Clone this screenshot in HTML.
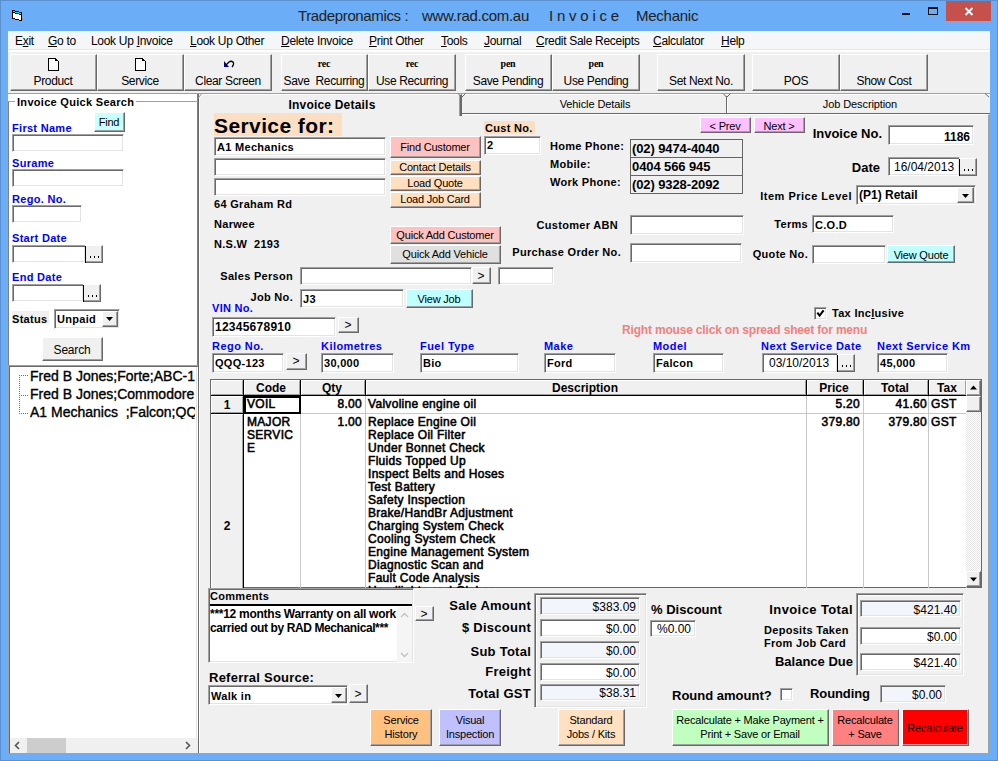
<!DOCTYPE html>
<html><head><meta charset="utf-8"><title>Invoice</title><style>
*{margin:0;padding:0;box-sizing:border-box}
html,body{width:998px;height:761px;overflow:hidden;background:#6BADF6}
body{position:relative;font-family:"Liberation Sans",sans-serif;color:#000}
.a{position:absolute}
.tx{white-space:nowrap}
u{text-decoration:underline;text-underline-offset:1px}
.sk{border-top:1px solid #a0a0a0;border-left:1px solid #a0a0a0;border-right:1px solid #fff;border-bottom:1px solid #fff;box-shadow:inset 1px 1px 0 #696969,inset -1px -1px 0 #e3e3e3}
.rs{border-top:1px solid #fff;border-left:1px solid #fff;border-right:1px solid #696969;border-bottom:1px solid #696969;box-shadow:inset -1px -1px 0 #a0a0a0}
.tb{background:#F0F0F0;border-top:1px solid #fff;border-left:1px solid #fff;border-right:1px solid #696969;border-bottom:1px solid #696969;box-shadow:inset -1px -1px 0 #a0a0a0}
</style></head><body>
<div class="a" style="left:0px;top:0px;width:998px;height:761px;background:#6BADF6"></div>
<div class="a" style="left:0px;top:0px;width:998px;height:1px;background:#5a8fd0"></div>
<div class="a" style="left:0px;top:0px;width:1px;height:761px;background:#5a8fd0"></div>
<div class="a" style="left:997px;top:0px;width:1px;height:761px;background:#5a8fd0"></div>
<div class="a" style="left:0px;top:760px;width:998px;height:1px;background:#5a8fd0"></div>
<svg class="a" style="left:12px;top:10px" width="11" height="12" viewBox="0 0 11 12" shape-rendering="crispEdges"><rect x="0" y="0" width="3" height="9" fill="#000"/><rect x="3" y="1" width="4" height="9" fill="#000"/><rect x="7" y="2" width="3" height="9" fill="#000"/><rect x="1" y="1" width="2" height="1" fill="#0ee"/><rect x="3" y="2" width="4" height="1" fill="#0ee"/><rect x="7" y="3" width="2" height="1" fill="#0ee"/><rect x="1" y="3" width="2" height="5" fill="#fff"/><rect x="3" y="4" width="4" height="5" fill="#fff"/><rect x="7" y="5" width="2" height="5" fill="#fff"/><rect x="10" y="8" width="1" height="2" fill="#a08870"/></svg>
<div class="a tx" style="left:298px;top:8px;font-size:15px;line-height:15px;font-weight:normal;color:#222;letter-spacing:-0.37px;">Tradepronamics :</div>
<div class="a tx" style="left:422px;top:8px;font-size:15px;line-height:15px;font-weight:normal;color:#222;letter-spacing:-0.28px;">www.rad.com.au</div>
<div class="a tx" style="left:549px;top:8px;font-size:15px;line-height:15px;font-weight:normal;color:#222;letter-spacing:-0.2px;">I n v o i c e</div>
<div class="a tx" style="left:636px;top:8px;font-size:15px;line-height:15px;font-weight:normal;color:#222;letter-spacing:-0.25px;">Mechanic</div>
<div class="a" style="left:902px;top:13px;width:8px;height:2px;background:#111"></div>
<div class="a" style="left:928px;top:7px;width:10px;height:8px;border:1px solid #111;border-top-width:2px"></div>
<div class="a" style="left:946px;top:1px;width:45px;height:20px;background:#C6504C"></div>
<svg class="a" style="left:964px;top:7px" width="10" height="9" viewBox="0 0 10 9"><path d="M1.5 1L8.5 8M8.5 1L1.5 8" stroke="#fff" stroke-width="1.9"/></svg>
<div class="a" style="left:8px;top:31px;width:982px;height:722px;background:#F0F0F0"></div>
<div class="a" style="left:8px;top:31px;width:982px;height:19px;background:#F5F6F7"></div>
<div class="a" style="left:8px;top:49px;width:982px;height:1px;background:#E6E7E8"></div>
<div class="a" style="left:8px;top:50px;width:982px;height:2px;background:#fff"></div>
<div class="a tx" style="left:15px;top:35px;font-size:12px;line-height:12px;font-weight:normal;color:#000;letter-spacing:-0.3px;">E<u>x</u>it</div>
<div class="a tx" style="left:48px;top:35px;font-size:12px;line-height:12px;font-weight:normal;color:#000;letter-spacing:-0.3px;"><u>G</u>o to</div>
<div class="a tx" style="left:91px;top:35px;font-size:12px;line-height:12px;font-weight:normal;color:#000;letter-spacing:-0.3px;">Look Up <u>I</u>nvoice</div>
<div class="a tx" style="left:190px;top:35px;font-size:12px;line-height:12px;font-weight:normal;color:#000;letter-spacing:-0.3px;"><u>L</u>ook Up Other</div>
<div class="a tx" style="left:281px;top:35px;font-size:12px;line-height:12px;font-weight:normal;color:#000;letter-spacing:-0.3px;"><u>D</u>elete Invoice</div>
<div class="a tx" style="left:369px;top:35px;font-size:12px;line-height:12px;font-weight:normal;color:#000;letter-spacing:-0.3px;"><u>P</u>rint Other</div>
<div class="a tx" style="left:441px;top:35px;font-size:12px;line-height:12px;font-weight:normal;color:#000;letter-spacing:-0.3px;"><u>T</u>ools</div>
<div class="a tx" style="left:484px;top:35px;font-size:12px;line-height:12px;font-weight:normal;color:#000;letter-spacing:-0.3px;"><u>J</u>ournal</div>
<div class="a tx" style="left:536px;top:35px;font-size:12px;line-height:12px;font-weight:normal;color:#000;letter-spacing:-0.3px;"><u>C</u>redit Sale Receipts</div>
<div class="a tx" style="left:653px;top:35px;font-size:12px;line-height:12px;font-weight:normal;color:#000;letter-spacing:-0.3px;"><u>C</u>alculator</div>
<div class="a tx" style="left:721px;top:35px;font-size:12px;line-height:12px;font-weight:normal;color:#000;letter-spacing:-0.3px;"><u>H</u>elp</div>
<div class="a" style="left:8px;top:52px;width:982px;height:41px;background:#F0F0F0"></div>
<div class="a" style="left:8px;top:93px;width:982px;height:1px;background:#A0A0A0"></div>
<div class="a tb" style="left:10px;top:54px;width:87px;height:37px"></div>
<div class="a tx" style="left:-247px;width:600px;text-align:center;top:75px;font-size:12px;line-height:12px;font-weight:normal;color:#000;letter-spacing:-0.35px;">Product</div>
<svg class="a" style="left:48px;top:58px" width="12" height="14" viewBox="0 0 12 14" shape-rendering="crispEdges"><path d="M0.5 0.5h7l3 3v9h-10z" fill="#fff" stroke="#000" stroke-width="1.2"/><rect x="7" y="1" width="1" height="2" fill="#000"/><rect x="8" y="2" width="2" height="1" fill="#000"/></svg>
<div class="a tb" style="left:97px;top:54px;width:87px;height:37px"></div>
<div class="a tx" style="left:-160px;width:600px;text-align:center;top:75px;font-size:12px;line-height:12px;font-weight:normal;color:#000;letter-spacing:-0.35px;">Service</div>
<svg class="a" style="left:135px;top:58px" width="12" height="14" viewBox="0 0 12 14" shape-rendering="crispEdges"><path d="M0.5 0.5h7l3 3v9h-10z" fill="#fff" stroke="#000" stroke-width="1.2"/><rect x="7" y="1" width="1" height="2" fill="#000"/><rect x="8" y="2" width="2" height="1" fill="#000"/></svg>
<div class="a tb" style="left:184px;top:54px;width:88px;height:37px"></div>
<div class="a tx" style="left:-72px;width:600px;text-align:center;top:75px;font-size:12px;line-height:12px;font-weight:normal;color:#000;letter-spacing:-0.35px;">Clear Screen</div>
<svg class="a" style="left:223px;top:60px" width="12" height="8" viewBox="0 0 12 8"><path d="M1 1v6h5z" fill="#00008B"/><path d="M3 5l3-3q2-1.5 4 0q1.5 2-1 5" fill="none" stroke="#000" stroke-width="1.3"/></svg>
<div class="a tb" style="left:281px;top:54px;width:87px;height:37px"></div>
<div class="a tx" style="left:24px;width:600px;text-align:center;top:75px;font-size:12px;line-height:12px;font-weight:normal;color:#000;letter-spacing:-0.35px;">Save&nbsp; Recurring</div>
<div class="a tx" style="left:24px;width:600px;text-align:center;top:59px;font-size:10px;line-height:10px;font-weight:bold;color:#000;letter-spacing:-0.2px;font-family:'Liberation Serif'">rec</div>
<div class="a tb" style="left:368px;top:54px;width:88px;height:37px"></div>
<div class="a tx" style="left:112px;width:600px;text-align:center;top:75px;font-size:12px;line-height:12px;font-weight:normal;color:#000;letter-spacing:-0.35px;">Use Recurring</div>
<div class="a tx" style="left:112px;width:600px;text-align:center;top:59px;font-size:10px;line-height:10px;font-weight:bold;color:#000;letter-spacing:-0.2px;font-family:'Liberation Serif'">rec</div>
<div class="a tb" style="left:465px;top:54px;width:87px;height:37px"></div>
<div class="a tx" style="left:208px;width:600px;text-align:center;top:75px;font-size:12px;line-height:12px;font-weight:normal;color:#000;letter-spacing:-0.35px;">Save Pending</div>
<div class="a tx" style="left:208px;width:600px;text-align:center;top:59px;font-size:10px;line-height:10px;font-weight:bold;color:#000;letter-spacing:-0.2px;font-family:'Liberation Serif'">pen</div>
<div class="a tb" style="left:552px;top:54px;width:88px;height:37px"></div>
<div class="a tx" style="left:296px;width:600px;text-align:center;top:75px;font-size:12px;line-height:12px;font-weight:normal;color:#000;letter-spacing:-0.35px;">Use Pending</div>
<div class="a tx" style="left:296px;width:600px;text-align:center;top:59px;font-size:10px;line-height:10px;font-weight:bold;color:#000;letter-spacing:-0.2px;font-family:'Liberation Serif'">pen</div>
<div class="a tb" style="left:657px;top:54px;width:88px;height:37px"></div>
<div class="a tx" style="left:401px;width:600px;text-align:center;top:75px;font-size:12px;line-height:12px;font-weight:normal;color:#000;letter-spacing:-0.35px;">Set Next No.</div>
<div class="a tb" style="left:752px;top:54px;width:88px;height:37px"></div>
<div class="a tx" style="left:496px;width:600px;text-align:center;top:75px;font-size:12px;line-height:12px;font-weight:normal;color:#000;letter-spacing:-0.35px;">POS</div>
<div class="a tb" style="left:840px;top:54px;width:88px;height:37px"></div>
<div class="a tx" style="left:584px;width:600px;text-align:center;top:75px;font-size:12px;line-height:12px;font-weight:normal;color:#000;letter-spacing:-0.35px;">Show Cost</div>
<div class="a" style="left:8px;top:94px;width:190px;height:644px;background:#fff"></div>
<div class="a" style="left:198px;top:94px;width:1px;height:659px;background:#696969"></div>
<div class="a" style="left:197px;top:94px;width:1px;height:271px;background:#808080"></div>
<div class="a" style="left:196px;top:367px;width:1px;height:371px;background:#e3e3e3"></div>
<div class="a" style="left:8px;top:365px;width:1px;height:388px;background:#a0a0a0"></div>
<div class="a" style="left:9px;top:366px;width:1px;height:387px;background:#696969"></div>
<div class="a" style="left:8px;top:365px;width:190px;height:1px;background:#a0a0a0"></div>
<div class="a" style="left:9px;top:366px;width:189px;height:1px;background:#696969"></div>
<div class="a" style="left:8px;top:101px;width:1px;height:264px;background:#808080"></div>
<div class="a" style="left:8px;top:101px;width:190px;height:1px;background:#a0a0a0"></div>
<div class="a tx" style="left:15px;top:97px;background:#fff;padding:0 2px;font-size:11px;line-height:11px;font-weight:bold;letter-spacing:0.3px">Invoice Quick Search</div>
<div class="a rs" style="left:94px;top:112px;width:31px;height:20px;background:#C8FFFF;"></div>
<div class="a tx" style="left:-191px;width:600px;text-align:center;top:117px;font-size:11px;line-height:11px;font-weight:normal;color:#000;letter-spacing:-0.2px;">Find</div>
<div class="a tx" style="left:12px;top:123px;font-size:11px;line-height:11px;font-weight:bold;color:#0000FF;letter-spacing:0.3px;">First Name</div>
<div class="a sk" style="left:12px;top:134px;width:112px;height:18px;background:#fff;"></div>
<div class="a tx" style="left:12px;top:158px;font-size:11px;line-height:11px;font-weight:bold;color:#0000FF;letter-spacing:0.3px;">Surame</div>
<div class="a sk" style="left:12px;top:169px;width:112px;height:18px;background:#fff;"></div>
<div class="a tx" style="left:12px;top:194px;font-size:11px;line-height:11px;font-weight:bold;color:#0000FF;letter-spacing:0.3px;">Rego. No.</div>
<div class="a sk" style="left:12px;top:205px;width:70px;height:18px;background:#fff;"></div>
<div class="a tx" style="left:12px;top:233px;font-size:11px;line-height:11px;font-weight:bold;color:#0000FF;letter-spacing:0.3px;">Start Date</div>
<div class="a sk" style="left:12px;top:245px;width:74px;height:18px;background:#fff;"></div>
<div class="a rs" style="left:85px;top:245px;width:18px;height:18px;background:#F0F0F0;"></div>
<div class="a" style="left:85px;top:246px;width:1px;height:17px;background:#000"></div>
<div class="a" style="left:90px;top:256px;width:1px;height:2px;background:#000"></div>
<div class="a" style="left:94px;top:256px;width:1px;height:2px;background:#000"></div>
<div class="a" style="left:98px;top:256px;width:1px;height:2px;background:#000"></div>
<div class="a tx" style="left:12px;top:272px;font-size:11px;line-height:11px;font-weight:bold;color:#0000FF;letter-spacing:0.3px;">End Date</div>
<div class="a sk" style="left:12px;top:284px;width:72px;height:18px;background:#fff;"></div>
<div class="a rs" style="left:83px;top:284px;width:18px;height:18px;background:#F0F0F0;"></div>
<div class="a" style="left:83px;top:285px;width:1px;height:17px;background:#000"></div>
<div class="a" style="left:88px;top:295px;width:1px;height:2px;background:#000"></div>
<div class="a" style="left:92px;top:295px;width:1px;height:2px;background:#000"></div>
<div class="a" style="left:96px;top:295px;width:1px;height:2px;background:#000"></div>
<div class="a" style="left:12px;top:311px;width:37px;height:13px;background:#F0F0F0"></div>
<div class="a tx" style="left:12px;top:314px;font-size:11px;line-height:11px;font-weight:bold;color:#000;letter-spacing:0.3px;">Status</div>
<div class="a sk" style="left:54px;top:309px;width:66px;height:20px;background:#fff;"></div>
<div class="a tx" style="left:57px;top:314px;font-size:11px;line-height:11px;font-weight:bold;color:#000;letter-spacing:0.3px;">Unpaid</div>
<div class="a rs" style="left:102px;top:311px;width:16px;height:16px;background:#F0F0F0;"></div>
<svg class="a" style="left:106px;top:317px" width="8" height="4"><path d="M0 0h7l-3.5 4z" fill="#000"/></svg>
<div class="a rs" style="left:42px;top:337px;width:61px;height:24px;background:#F0F0F0;"></div>
<div class="a tx" style="left:-228px;width:600px;text-align:center;top:344px;font-size:12px;line-height:12px;font-weight:normal;color:#000;letter-spacing:-0.2px;">Search</div>
<div class="a tx" style="left:30px;top:369px;font-size:14px;line-height:14px;font-weight:normal;color:#000;width:165px;overflow:hidden;-webkit-text-stroke:0.35px #000">Fred B Jones;Forte;ABC-123</div>
<div class="a tx" style="left:30px;top:387px;font-size:14px;line-height:14px;font-weight:normal;color:#000;width:165px;overflow:hidden;-webkit-text-stroke:0.35px #000">Fred B Jones;Commodore;XYZ</div>
<div class="a tx" style="left:30px;top:405px;font-size:14px;line-height:14px;font-weight:normal;color:#000;width:165px;overflow:hidden;-webkit-text-stroke:0.35px #000">A1 Mechanics&nbsp; ;Falcon;QQQ-123</div>
<svg class="a" style="left:19px;top:375px" width="10" height="40" shape-rendering="crispEdges"><rect x="0" y="0" width="1" height="1" fill="#707070"/><rect x="0" y="2" width="1" height="1" fill="#707070"/><rect x="0" y="4" width="1" height="1" fill="#707070"/><rect x="0" y="6" width="1" height="1" fill="#707070"/><rect x="0" y="8" width="1" height="1" fill="#707070"/><rect x="0" y="10" width="1" height="1" fill="#707070"/><rect x="0" y="12" width="1" height="1" fill="#707070"/><rect x="0" y="14" width="1" height="1" fill="#707070"/><rect x="0" y="16" width="1" height="1" fill="#707070"/><rect x="0" y="18" width="1" height="1" fill="#707070"/><rect x="0" y="20" width="1" height="1" fill="#707070"/><rect x="0" y="22" width="1" height="1" fill="#707070"/><rect x="0" y="24" width="1" height="1" fill="#707070"/><rect x="0" y="26" width="1" height="1" fill="#707070"/><rect x="0" y="28" width="1" height="1" fill="#707070"/><rect x="0" y="30" width="1" height="1" fill="#707070"/><rect x="0" y="32" width="1" height="1" fill="#707070"/><rect x="0" y="34" width="1" height="1" fill="#707070"/><rect x="0" y="36" width="1" height="1" fill="#707070"/><rect x="0" y="38" width="1" height="1" fill="#707070"/><rect x="2" y="0" width="1" height="1" fill="#707070"/><rect x="4" y="0" width="1" height="1" fill="#707070"/><rect x="6" y="0" width="1" height="1" fill="#707070"/><rect x="8" y="0" width="1" height="1" fill="#707070"/><rect x="2" y="20" width="1" height="1" fill="#707070"/><rect x="4" y="20" width="1" height="1" fill="#707070"/><rect x="6" y="20" width="1" height="1" fill="#707070"/><rect x="8" y="20" width="1" height="1" fill="#707070"/><rect x="2" y="38" width="1" height="1" fill="#707070"/><rect x="4" y="38" width="1" height="1" fill="#707070"/><rect x="6" y="38" width="1" height="1" fill="#707070"/><rect x="8" y="38" width="1" height="1" fill="#707070"/></svg>
<div class="a" style="left:10px;top:738px;width:187px;height:15px;background:#F0F0F0"></div>
<div class="a" style="left:27px;top:738px;width:39px;height:15px;background:#CDCDCD"></div>
<svg class="a" style="left:14px;top:741px" width="7" height="9"><path d="M5 1L1.5 4.5L5 8" stroke="#555" stroke-width="1.6" fill="none"/></svg>
<svg class="a" style="left:184px;top:741px" width="7" height="9"><path d="M2 1L5.5 4.5L2 8" stroke="#555" stroke-width="1.6" fill="none"/></svg>
<div class="a" style="left:199px;top:114px;width:791px;height:639px;background:#F0F0F0;border-top:1px solid #fff;border-left:1px solid #fff;border-right:2px solid #a0a0a0"></div>
<div class="a" style="left:462px;top:94px;width:528px;height:19px;background:#F0F0F0;border-top:1px solid #fff"></div>
<div class="a" style="left:462px;top:113px;width:528px;height:1px;background:#696969"></div>
<div class="a" style="left:726px;top:96px;width:1px;height:17px;background:#696969"></div>
<div class="a" style="left:727px;top:96px;width:1px;height:17px;background:#fff"></div>
<svg class="a" style="left:722px;top:93px" width="10" height="5"><path d="M1 0.5L4.5 4M8.5 0.5L5 4" stroke="#696969" fill="none"/></svg>
<svg class="a" style="left:984px;top:93px" width="6" height="5"><path d="M1 0.5L5 4" stroke="#696969" fill="none"/></svg>
<div class="a tx" style="left:295px;width:600px;text-align:center;top:99px;font-size:11px;line-height:11px;font-weight:normal;color:#000;letter-spacing:-0.1px;">Vehicle Details</div>
<div class="a tx" style="left:560px;width:600px;text-align:center;top:99px;font-size:11px;line-height:11px;font-weight:normal;color:#000;letter-spacing:-0.1px;">Job Description</div>
<div class="a" style="left:199px;top:94px;width:263px;height:22px;background:#F0F0F0;border-top:1px solid #fff;border-left:1px solid #fff;border-right:2px solid #696969;box-shadow:inset -1px 0 0 #a0a0a0"></div>
<div class="a" style="left:199px;top:94px;width:3px;height:3px;background:#F0F0F0"></div>
<svg class="a" style="left:197px;top:93px" width="6" height="6"><path d="M2.5 5L5.5 1.5" stroke="#fff" fill="none"/><path d="M1 5.5L4.5 1" stroke="#a0a0a0" fill="none"/></svg>
<svg class="a" style="left:457px;top:93px" width="10" height="5"><path d="M1 0.5L4.5 4M8.5 0.5L5 4" stroke="#696969" fill="none"/></svg>
<div class="a tx" style="left:32px;width:600px;text-align:center;top:99px;font-size:12px;line-height:12px;font-weight:bold;color:#000;letter-spacing:0.2px;">Invoice Details</div>
<div class="a" style="left:214px;top:113px;width:128px;height:23px;background:#FCDEC2"></div>
<div class="a tx" style="left:214px;top:115px;font-size:21px;line-height:21px;font-weight:bold;color:#000;letter-spacing:0.4px;">Service for:</div>
<div class="a sk" style="left:214px;top:137px;width:172px;height:19px;background:#fff;"></div>
<div class="a tx" style="left:217px;top:142px;font-size:11px;line-height:11px;font-weight:bold;color:#000;letter-spacing:0.3px;">A1 Mechanics</div>
<div class="a sk" style="left:214px;top:158px;width:172px;height:18px;background:#fff;"></div>
<div class="a sk" style="left:214px;top:178px;width:172px;height:18px;background:#fff;"></div>
<div class="a tx" style="left:214px;top:199px;font-size:11px;line-height:11px;font-weight:bold;color:#000;letter-spacing:0.3px;">64 Graham Rd</div>
<div class="a tx" style="left:214px;top:219px;font-size:11px;line-height:11px;font-weight:bold;color:#000;letter-spacing:0.3px;">Narwee</div>
<div class="a tx" style="left:214px;top:239px;font-size:11px;line-height:11px;font-weight:bold;color:#000;letter-spacing:0.3px;">N.S.W&nbsp; 2193</div>
<div class="a rs" style="left:390px;top:136px;width:91px;height:22px;background:#FFC0C0;"></div>
<div class="a tx" style="left:135px;width:600px;text-align:center;top:142px;font-size:11px;line-height:11px;font-weight:normal;color:#000;letter-spacing:-0.2px;">Find Customer</div>
<div class="a rs" style="left:390px;top:160px;width:91px;height:15px;background:#FFDFBF;"></div>
<div class="a tx" style="left:135px;width:600px;text-align:center;top:162px;font-size:11px;line-height:11px;font-weight:normal;color:#000;letter-spacing:-0.2px;">Contact Details</div>
<div class="a rs" style="left:390px;top:176px;width:91px;height:15px;background:#FFDFBF;"></div>
<div class="a tx" style="left:135px;width:600px;text-align:center;top:178px;font-size:11px;line-height:11px;font-weight:normal;color:#000;letter-spacing:-0.2px;">Load Quote</div>
<div class="a rs" style="left:390px;top:192px;width:91px;height:16px;background:#FFDFBF;"></div>
<div class="a tx" style="left:135px;width:600px;text-align:center;top:194px;font-size:11px;line-height:11px;font-weight:normal;color:#000;letter-spacing:-0.2px;">Load Job Card</div>
<div class="a rs" style="left:390px;top:226px;width:111px;height:18px;background:#FFC0C0;"></div>
<div class="a tx" style="left:145px;width:600px;text-align:center;top:230px;font-size:11px;line-height:11px;font-weight:normal;color:#000;letter-spacing:-0.2px;">Quick Add Customer</div>
<div class="a rs" style="left:390px;top:245px;width:111px;height:19px;background:#E0E0E0;"></div>
<div class="a tx" style="left:145px;width:600px;text-align:center;top:249px;font-size:11px;line-height:11px;font-weight:normal;color:#000;letter-spacing:-0.2px;">Quick Add Vehicle</div>
<div class="a" style="left:484px;top:121px;width:51px;height:13px;background:#FCDEC2"></div>
<div class="a tx" style="left:485px;top:123px;font-size:11px;line-height:11px;font-weight:bold;color:#000;letter-spacing:0.3px;">Cust No.</div>
<div class="a sk" style="left:484px;top:136px;width:57px;height:19px;background:#fff;"></div>
<div class="a tx" style="left:487px;top:140px;font-size:11px;line-height:11px;font-weight:bold;color:#000;letter-spacing:0.3px;">2</div>
<div class="a tx" style="left:550px;top:141px;font-size:11px;line-height:11px;font-weight:bold;color:#000;letter-spacing:0.3px;">Home Phone:</div>
<div class="a tx" style="left:550px;top:159px;font-size:11px;line-height:11px;font-weight:bold;color:#000;letter-spacing:0.3px;">Mobile:</div>
<div class="a tx" style="left:550px;top:177px;font-size:11px;line-height:11px;font-weight:bold;color:#000;letter-spacing:0.3px;">Work Phone:</div>
<div class="a" style="left:630px;top:139px;width:113px;height:19px;border:1px solid #646464;background:#F0F0F0"></div>
<div class="a tx" style="left:632px;top:142px;font-size:13px;line-height:13px;font-weight:bold;color:#000;letter-spacing:-0.1px;">(02) 9474-4040</div>
<div class="a" style="left:630px;top:157px;width:113px;height:19px;border:1px solid #646464;background:#F0F0F0"></div>
<div class="a tx" style="left:632px;top:160px;font-size:13px;line-height:13px;font-weight:bold;color:#000;letter-spacing:-0.1px;">0404 566 945</div>
<div class="a" style="left:630px;top:175px;width:113px;height:19px;border:1px solid #646464;background:#F0F0F0"></div>
<div class="a tx" style="left:632px;top:178px;font-size:13px;line-height:13px;font-weight:bold;color:#000;letter-spacing:-0.1px;">(02) 9328-2092</div>
<div class="a tx" style="right:380px;top:220px;font-size:11px;line-height:11px;font-weight:bold;color:#000;letter-spacing:0.3px;">Customer ABN</div>
<div class="a sk" style="left:630px;top:215px;width:114px;height:20px;background:#fff;"></div>
<div class="a tx" style="right:377px;top:247px;font-size:11px;line-height:11px;font-weight:bold;color:#000;letter-spacing:0.3px;">Purchase Order No.</div>
<div class="a sk" style="left:630px;top:243px;width:112px;height:20px;background:#fff;"></div>
<div class="a rs" style="left:700px;top:117px;width:51px;height:16px;background:#FFC0FF;"></div>
<div class="a tx" style="left:425px;width:600px;text-align:center;top:121px;font-size:11px;line-height:11px;font-weight:normal;color:#000;letter-spacing:-0.2px;">&lt; Prev</div>
<div class="a rs" style="left:754px;top:117px;width:51px;height:16px;background:#FFC0FF;"></div>
<div class="a tx" style="left:479px;width:600px;text-align:center;top:121px;font-size:11px;line-height:11px;font-weight:normal;color:#000;letter-spacing:-0.2px;">Next &gt;</div>
<div class="a tx" style="right:116px;top:127px;font-size:13px;line-height:13px;font-weight:bold;color:#000;">Invoice No.</div>
<div class="a sk" style="left:888px;top:125px;width:86px;height:20px;background:#fff;"></div>
<div class="a tx" style="right:28px;top:131px;font-size:12px;line-height:12px;font-weight:bold;color:#000;">1186</div>
<div class="a tx" style="right:118px;top:161px;font-size:13px;line-height:13px;font-weight:bold;color:#000;">Date</div>
<div class="a sk" style="left:888px;top:157px;width:72px;height:19px;background:#fff;"></div>
<div class="a tx" style="left:894px;top:161px;font-size:12px;line-height:12px;font-weight:normal;color:#000;">16/04/2013</div>
<div class="a rs" style="left:959px;top:158px;width:18px;height:18px;background:#F0F0F0;"></div>
<div class="a" style="left:959px;top:159px;width:1px;height:17px;background:#000"></div>
<div class="a" style="left:964px;top:169px;width:1px;height:2px;background:#000"></div>
<div class="a" style="left:968px;top:169px;width:1px;height:2px;background:#000"></div>
<div class="a" style="left:972px;top:169px;width:1px;height:2px;background:#000"></div>
<div class="a tx" style="right:146px;top:191px;font-size:11px;line-height:11px;font-weight:bold;color:#000;letter-spacing:0.5px;">Item Price Level</div>
<div class="a sk" style="left:856px;top:185px;width:120px;height:20px;background:#fff;"></div>
<div class="a tx" style="left:859px;top:189px;font-size:12px;line-height:12px;font-weight:bold;color:#000;">(P1) Retail</div>
<div class="a rs" style="left:957px;top:187px;width:17px;height:16px;background:#F0F0F0;"></div>
<svg class="a" style="left:962px;top:194px" width="8" height="4"><path d="M0 0h7l-3.5 4z" fill="#000"/></svg>
<div class="a tx" style="right:190px;top:219px;font-size:11px;line-height:11px;font-weight:bold;color:#000;letter-spacing:0.3px;">Terms</div>
<div class="a sk" style="left:812px;top:215px;width:82px;height:18px;background:#fff;"></div>
<div class="a tx" style="left:815px;top:220px;font-size:11px;line-height:11px;font-weight:bold;color:#000;letter-spacing:0.3px;">C.O.D</div>
<div class="a tx" style="right:190px;top:249px;font-size:11px;line-height:11px;font-weight:bold;color:#000;letter-spacing:0.3px;">Quote No.</div>
<div class="a sk" style="left:812px;top:245px;width:74px;height:19px;background:#fff;"></div>
<div class="a rs" style="left:887px;top:245px;width:68px;height:18px;background:#C0FFFF;"></div>
<div class="a tx" style="left:621px;width:600px;text-align:center;top:250px;font-size:11px;line-height:11px;font-weight:normal;color:#000;letter-spacing:-0.2px;">View Quote</div>
<div class="a tx" style="right:705px;top:271px;font-size:11px;line-height:11px;font-weight:bold;color:#000;letter-spacing:0.3px;">Sales Person</div>
<div class="a sk" style="left:300px;top:267px;width:172px;height:18px;background:#fff;"></div>
<div class="a rs" style="left:472px;top:267px;width:19px;height:17px;background:#F0F0F0;"></div>
<div class="a tx" style="left:181px;width:600px;text-align:center;top:270px;font-size:12px;line-height:12px;font-weight:normal;color:#000;letter-spacing:-0.2px;">&gt;</div>
<div class="a sk" style="left:498px;top:267px;width:56px;height:18px;background:#fff;"></div>
<div class="a tx" style="right:705px;top:292px;font-size:11px;line-height:11px;font-weight:bold;color:#000;letter-spacing:0.3px;">Job No.</div>
<div class="a sk" style="left:300px;top:289px;width:104px;height:19px;background:#fff;"></div>
<div class="a tx" style="left:303px;top:294px;font-size:11px;line-height:11px;font-weight:bold;color:#000;letter-spacing:0.3px;">J3</div>
<div class="a rs" style="left:406px;top:289px;width:67px;height:19px;background:#C0FFFF;"></div>
<div class="a tx" style="left:139px;width:600px;text-align:center;top:294px;font-size:11px;line-height:11px;font-weight:normal;color:#000;letter-spacing:-0.2px;">View Job</div>
<div class="a tx" style="left:212px;top:303px;font-size:11px;line-height:11px;font-weight:bold;color:#0000FF;letter-spacing:0.3px;">VIN No.</div>
<div class="a sk" style="left:212px;top:317px;width:124px;height:20px;background:#fff;"></div>
<div class="a tx" style="left:215px;top:321px;font-size:12px;line-height:12px;font-weight:bold;color:#000;letter-spacing:0.25px;">12345678910</div>
<div class="a rs" style="left:338px;top:317px;width:21px;height:16px;background:#F0F0F0;"></div>
<div class="a tx" style="left:48px;width:600px;text-align:center;top:319px;font-size:12px;line-height:12px;font-weight:normal;color:#000;letter-spacing:-0.2px;">&gt;</div>
<div class="a sk" style="left:814px;top:307px;width:13px;height:13px;background:#fff;"></div>
<svg class="a" style="left:816px;top:309px" width="9" height="9" viewBox="0 0 9 9"><path d="M1.3 3.6L3.6 6.6L7.6 1.4" stroke="#000" stroke-width="2.1" fill="none"/></svg>
<div class="a tx" style="left:832px;top:308px;font-size:11px;line-height:11px;font-weight:bold;color:#000;letter-spacing:0.3px;">Tax Inc<u>l</u>usive</div>
<div class="a tx" style="left:622px;top:324px;font-size:12px;line-height:12px;font-weight:bold;color:#F08080;letter-spacing:-0.18px;">Right mouse click on spread sheet for menu</div>
<div class="a tx" style="left:212px;top:341px;font-size:11px;line-height:11px;font-weight:bold;color:#0000FF;letter-spacing:0.45px;">Rego No.</div>
<div class="a tx" style="left:321px;top:341px;font-size:11px;line-height:11px;font-weight:bold;color:#0000FF;letter-spacing:0.45px;">Kilometres</div>
<div class="a tx" style="left:420px;top:341px;font-size:11px;line-height:11px;font-weight:bold;color:#0000FF;letter-spacing:0.45px;">Fuel Type</div>
<div class="a tx" style="left:544px;top:341px;font-size:11px;line-height:11px;font-weight:bold;color:#0000FF;letter-spacing:0.45px;">Make</div>
<div class="a tx" style="left:653px;top:341px;font-size:11px;line-height:11px;font-weight:bold;color:#0000FF;letter-spacing:0.45px;">Model</div>
<div class="a tx" style="left:761px;top:341px;font-size:11px;line-height:11px;font-weight:bold;color:#0000FF;letter-spacing:0.45px;">Next Service Date</div>
<div class="a tx" style="left:877px;top:341px;font-size:11px;line-height:11px;font-weight:bold;color:#0000FF;letter-spacing:0.45px;">Next Service Km</div>
<div class="a sk" style="left:212px;top:353px;width:72px;height:20px;background:#fff;"></div>
<div class="a tx" style="left:215px;top:358px;font-size:11px;line-height:11px;font-weight:bold;color:#000;letter-spacing:0.3px;">QQQ-123</div>
<div class="a rs" style="left:286px;top:353px;width:21px;height:17px;background:#F0F0F0;"></div>
<div class="a tx" style="left:-4px;width:600px;text-align:center;top:355px;font-size:12px;line-height:12px;font-weight:normal;color:#000;letter-spacing:-0.2px;">&gt;</div>
<div class="a sk" style="left:321px;top:353px;width:73px;height:20px;background:#fff;"></div>
<div class="a tx" style="left:324px;top:358px;font-size:11px;line-height:11px;font-weight:bold;color:#000;letter-spacing:0.3px;">30,000</div>
<div class="a sk" style="left:420px;top:353px;width:99px;height:20px;background:#fff;"></div>
<div class="a tx" style="left:423px;top:358px;font-size:11px;line-height:11px;font-weight:bold;color:#000;letter-spacing:0.3px;">Bio</div>
<div class="a sk" style="left:544px;top:353px;width:72px;height:20px;background:#fff;"></div>
<div class="a tx" style="left:547px;top:358px;font-size:11px;line-height:11px;font-weight:bold;color:#000;letter-spacing:0.3px;">Ford</div>
<div class="a sk" style="left:653px;top:353px;width:71px;height:20px;background:#fff;"></div>
<div class="a tx" style="left:656px;top:358px;font-size:11px;line-height:11px;font-weight:bold;color:#000;letter-spacing:0.3px;">Falcon</div>
<div class="a sk" style="left:762px;top:353px;width:76px;height:20px;background:#fff;"></div>
<div class="a tx" style="left:769px;top:357px;font-size:12px;line-height:12px;font-weight:normal;color:#000;">03/10/2013</div>
<div class="a rs" style="left:837px;top:354px;width:18px;height:18px;background:#F0F0F0;"></div>
<div class="a" style="left:837px;top:355px;width:1px;height:17px;background:#000"></div>
<div class="a" style="left:842px;top:365px;width:1px;height:2px;background:#000"></div>
<div class="a" style="left:846px;top:365px;width:1px;height:2px;background:#000"></div>
<div class="a" style="left:850px;top:365px;width:1px;height:2px;background:#000"></div>
<div class="a sk" style="left:877px;top:353px;width:71px;height:20px;background:#fff;"></div>
<div class="a tx" style="left:880px;top:358px;font-size:11px;line-height:11px;font-weight:bold;color:#000;letter-spacing:0.3px;">45,000</div>
<div class="a" style="left:0;top:0;width:998px;height:588px;overflow:hidden">
<div class="a" style="left:210px;top:379px;width:772px;height:209px;background:#fff;border:1px solid #696969"></div>
<div class="a" style="left:211px;top:380px;width:755px;height:15px;background:#F0F0F0"></div>
<div class="a" style="left:211px;top:380px;width:32px;height:15px;border-top:1px solid #fff;border-left:1px solid #fff;border-right:1px solid #a0a0a0;border-bottom:1px solid #a0a0a0"></div>
<div class="a" style="left:244px;top:380px;width:56px;height:15px;border-top:1px solid #fff;border-left:1px solid #fff;border-right:1px solid #a0a0a0;border-bottom:1px solid #a0a0a0"></div>
<div class="a" style="left:243px;top:380px;width:1px;height:15px;background:#000"></div>
<div class="a" style="left:301px;top:380px;width:64px;height:15px;border-top:1px solid #fff;border-left:1px solid #fff;border-right:1px solid #a0a0a0;border-bottom:1px solid #a0a0a0"></div>
<div class="a" style="left:300px;top:380px;width:1px;height:15px;background:#000"></div>
<div class="a" style="left:366px;top:380px;width:440px;height:15px;border-top:1px solid #fff;border-left:1px solid #fff;border-right:1px solid #a0a0a0;border-bottom:1px solid #a0a0a0"></div>
<div class="a" style="left:365px;top:380px;width:1px;height:15px;background:#000"></div>
<div class="a" style="left:807px;top:380px;width:56px;height:15px;border-top:1px solid #fff;border-left:1px solid #fff;border-right:1px solid #a0a0a0;border-bottom:1px solid #a0a0a0"></div>
<div class="a" style="left:806px;top:380px;width:1px;height:15px;background:#000"></div>
<div class="a" style="left:864px;top:380px;width:64px;height:15px;border-top:1px solid #fff;border-left:1px solid #fff;border-right:1px solid #a0a0a0;border-bottom:1px solid #a0a0a0"></div>
<div class="a" style="left:863px;top:380px;width:1px;height:15px;background:#000"></div>
<div class="a" style="left:929px;top:380px;width:37px;height:15px;border-top:1px solid #fff;border-left:1px solid #fff;border-right:1px solid #a0a0a0;border-bottom:1px solid #a0a0a0"></div>
<div class="a" style="left:928px;top:380px;width:1px;height:15px;background:#000"></div>
<div class="a" style="left:211px;top:395px;width:755px;height:1px;background:#000"></div>
<div class="a" style="left:211px;top:396px;width:32px;height:192px;background:#F0F0F0"></div>
<div class="a" style="left:211px;top:396px;width:32px;height:17px;border-top:1px solid #fff;border-left:1px solid #fff;border-right:1px solid #a0a0a0;border-bottom:1px solid #a0a0a0"></div>
<div class="a" style="left:211px;top:414px;width:32px;height:180px;border-top:1px solid #fff;border-left:1px solid #fff;border-right:1px solid #a0a0a0"></div>
<div class="a" style="left:243px;top:396px;width:1px;height:192px;background:#000"></div>
<div class="a" style="left:211px;top:413px;width:32px;height:1px;background:#000"></div>
<div class="a" style="left:300px;top:396px;width:1px;height:192px;background:#C8C8C8"></div>
<div class="a" style="left:365px;top:396px;width:1px;height:192px;background:#C8C8C8"></div>
<div class="a" style="left:806px;top:396px;width:1px;height:192px;background:#C8C8C8"></div>
<div class="a" style="left:863px;top:396px;width:1px;height:192px;background:#C8C8C8"></div>
<div class="a" style="left:928px;top:396px;width:1px;height:192px;background:#C8C8C8"></div>
<div class="a" style="left:966px;top:396px;width:1px;height:192px;background:#C8C8C8"></div>
<div class="a" style="left:244px;top:413px;width:722px;height:1px;background:#C8C8C8"></div>
<div class="a" style="left:244px;top:396px;width:57px;height:18px;border:2px solid #000"></div>
<div class="a tx" style="left:-29px;width:600px;text-align:center;top:382px;font-size:12px;line-height:12px;font-weight:bold;color:#000;">Code</div>
<div class="a tx" style="left:32px;width:600px;text-align:center;top:382px;font-size:12px;line-height:12px;font-weight:bold;color:#000;">Qty</div>
<div class="a tx" style="left:285px;width:600px;text-align:center;top:382px;font-size:12px;line-height:12px;font-weight:bold;color:#000;">Description</div>
<div class="a tx" style="left:534px;width:600px;text-align:center;top:382px;font-size:12px;line-height:12px;font-weight:bold;color:#000;">Price</div>
<div class="a tx" style="left:595px;width:600px;text-align:center;top:382px;font-size:12px;line-height:12px;font-weight:bold;color:#000;">Total</div>
<div class="a tx" style="left:647px;width:600px;text-align:center;top:382px;font-size:12px;line-height:12px;font-weight:bold;color:#000;">Tax</div>
<div class="a tx" style="left:-73px;width:600px;text-align:center;top:399px;font-size:12px;line-height:12px;font-weight:bold;color:#000;">1</div>
<div class="a tx" style="left:-73px;width:600px;text-align:center;top:520px;font-size:12px;line-height:12px;font-weight:bold;color:#000;">2</div>
<div class="a tx" style="left:247px;top:398px;font-size:12px;line-height:12px;font-weight:bold;color:#000;letter-spacing:0.3px;font-weight:normal;-webkit-text-stroke:0.55px #000">VOIL</div>
<div class="a tx" style="right:636px;top:398px;font-size:12px;line-height:12px;font-weight:bold;color:#000;letter-spacing:0.3px;font-weight:normal;-webkit-text-stroke:0.55px #000">8.00</div>
<div class="a tx" style="left:368px;top:398px;font-size:12px;line-height:12px;font-weight:bold;color:#000;letter-spacing:0.3px;font-weight:normal;-webkit-text-stroke:0.55px #000">Valvoline engine oil</div>
<div class="a tx" style="right:138px;top:398px;font-size:12px;line-height:12px;font-weight:bold;color:#000;letter-spacing:0.3px;font-weight:normal;-webkit-text-stroke:0.55px #000">5.20</div>
<div class="a tx" style="right:71px;top:398px;font-size:12px;line-height:12px;font-weight:bold;color:#000;letter-spacing:0.3px;font-weight:normal;-webkit-text-stroke:0.55px #000">41.60</div>
<div class="a tx" style="left:931px;top:398px;font-size:12px;line-height:12px;font-weight:bold;color:#000;letter-spacing:0.3px;font-weight:normal;-webkit-text-stroke:0.55px #000">GST</div>
<div class="a tx" style="left:247px;top:416px;font-size:12px;line-height:12px;font-weight:bold;color:#000;letter-spacing:0.3px;font-weight:normal;-webkit-text-stroke:0.55px #000">MAJOR</div>
<div class="a tx" style="left:247px;top:429px;font-size:12px;line-height:12px;font-weight:bold;color:#000;letter-spacing:0.3px;font-weight:normal;-webkit-text-stroke:0.55px #000">SERVIC</div>
<div class="a tx" style="left:247px;top:442px;font-size:12px;line-height:12px;font-weight:bold;color:#000;letter-spacing:0.3px;font-weight:normal;-webkit-text-stroke:0.55px #000">E</div>
<div class="a tx" style="right:636px;top:416px;font-size:12px;line-height:12px;font-weight:bold;color:#000;letter-spacing:0.3px;font-weight:normal;-webkit-text-stroke:0.55px #000">1.00</div>
<div class="a tx" style="right:138px;top:416px;font-size:12px;line-height:12px;font-weight:bold;color:#000;letter-spacing:0.3px;font-weight:normal;-webkit-text-stroke:0.55px #000">379.80</div>
<div class="a tx" style="right:71px;top:416px;font-size:12px;line-height:12px;font-weight:bold;color:#000;letter-spacing:0.3px;font-weight:normal;-webkit-text-stroke:0.55px #000">379.80</div>
<div class="a tx" style="left:931px;top:416px;font-size:12px;line-height:12px;font-weight:bold;color:#000;letter-spacing:0.3px;font-weight:normal;-webkit-text-stroke:0.55px #000">GST</div>
<div class="a tx" style="left:368px;top:416px;font-size:12px;line-height:12px;font-weight:bold;color:#000;letter-spacing:0.3px;font-weight:normal;-webkit-text-stroke:0.55px #000">Replace Engine Oil</div>
<div class="a tx" style="left:368px;top:429px;font-size:12px;line-height:12px;font-weight:bold;color:#000;letter-spacing:0.3px;font-weight:normal;-webkit-text-stroke:0.55px #000">Replace Oil Filter</div>
<div class="a tx" style="left:368px;top:442px;font-size:12px;line-height:12px;font-weight:bold;color:#000;letter-spacing:0.3px;font-weight:normal;-webkit-text-stroke:0.55px #000">Under Bonnet Check</div>
<div class="a tx" style="left:368px;top:455px;font-size:12px;line-height:12px;font-weight:bold;color:#000;letter-spacing:0.3px;font-weight:normal;-webkit-text-stroke:0.55px #000">Fluids Topped Up</div>
<div class="a tx" style="left:368px;top:468px;font-size:12px;line-height:12px;font-weight:bold;color:#000;letter-spacing:0.3px;font-weight:normal;-webkit-text-stroke:0.55px #000">Inspect Belts and Hoses</div>
<div class="a tx" style="left:368px;top:481px;font-size:12px;line-height:12px;font-weight:bold;color:#000;letter-spacing:0.3px;font-weight:normal;-webkit-text-stroke:0.55px #000">Test Battery</div>
<div class="a tx" style="left:368px;top:494px;font-size:12px;line-height:12px;font-weight:bold;color:#000;letter-spacing:0.3px;font-weight:normal;-webkit-text-stroke:0.55px #000">Safety Inspection</div>
<div class="a tx" style="left:368px;top:507px;font-size:12px;line-height:12px;font-weight:bold;color:#000;letter-spacing:0.3px;font-weight:normal;-webkit-text-stroke:0.55px #000">Brake/HandBr Adjustment</div>
<div class="a tx" style="left:368px;top:520px;font-size:12px;line-height:12px;font-weight:bold;color:#000;letter-spacing:0.3px;font-weight:normal;-webkit-text-stroke:0.55px #000">Charging System Check</div>
<div class="a tx" style="left:368px;top:533px;font-size:12px;line-height:12px;font-weight:bold;color:#000;letter-spacing:0.3px;font-weight:normal;-webkit-text-stroke:0.55px #000">Cooling System Check</div>
<div class="a tx" style="left:368px;top:546px;font-size:12px;line-height:12px;font-weight:bold;color:#000;letter-spacing:0.3px;font-weight:normal;-webkit-text-stroke:0.55px #000">Engine Management System</div>
<div class="a tx" style="left:368px;top:559px;font-size:12px;line-height:12px;font-weight:bold;color:#000;letter-spacing:0.3px;font-weight:normal;-webkit-text-stroke:0.55px #000">Diagnostic Scan and</div>
<div class="a tx" style="left:368px;top:572px;font-size:12px;line-height:12px;font-weight:bold;color:#000;letter-spacing:0.3px;font-weight:normal;-webkit-text-stroke:0.55px #000">Fault Code Analysis</div>
<div class="a tx" style="left:368px;top:585px;font-size:12px;line-height:12px;font-weight:bold;color:#000;letter-spacing:0.3px;font-weight:normal;-webkit-text-stroke:0.55px #000">Headlights and Globes</div>
<div class="a" style="left:966px;top:380px;width:15px;height:207px;background-color:#F0F0F0;background-image:conic-gradient(#fff 25%,#e6e6e6 0 50%,#fff 0 75%,#e6e6e6 0);background-size:2px 2px"></div>
<div class="a rs" style="left:966px;top:380px;width:15px;height:16px;background:#F0F0F0;"></div>
<svg class="a" style="left:970px;top:385px" width="8" height="5"><path d="M0 4.5h7l-3.5-4z" fill="#000"/></svg>
<div class="a rs" style="left:966px;top:396px;width:15px;height:16px;background:#F0F0F0;"></div>
<div class="a rs" style="left:966px;top:571px;width:15px;height:16px;background:#F0F0F0;"></div>
<svg class="a" style="left:970px;top:577px" width="8" height="5"><path d="M0 0.5h7l-3.5 4z" fill="#000"/></svg>
</div>
<div class="a" style="left:208px;top:588px;width:206px;height:75px;background:#fff"></div>
<div class="a" style="left:210px;top:590px;width:203px;height:15px;background:#F0F0F0"></div>
<div class="a" style="left:210px;top:604px;width:203px;height:2px;background:#000"></div>
<div class="a tx" style="left:210px;top:591px;font-size:11px;line-height:11px;font-weight:bold;color:#000;letter-spacing:0.3px;">Comments</div>
<div class="a sk" style="left:208px;top:588px;width:206px;height:75px;background:transparent"></div>
<div class="a tx" style="left:210px;top:608px;font-size:12px;line-height:12px;font-weight:bold;color:#000;letter-spacing:-0.27px;">***12 months Warranty on all work</div>
<div class="a tx" style="left:210px;top:622px;font-size:12px;line-height:12px;font-weight:bold;color:#000;letter-spacing:-0.4px;">carried out by RAD Mechanical***</div>
<div class="a" style="left:397px;top:607px;width:15px;height:55px;background:#F5F5F5"></div>
<svg class="a" style="left:400px;top:612px" width="9" height="6"><path d="M1 5L4.5 1.5L8 5" stroke="#c0c0c0" stroke-width="1.3" fill="none"/></svg>
<svg class="a" style="left:400px;top:652px" width="9" height="6"><path d="M1 1L4.5 4.5L8 1" stroke="#c0c0c0" stroke-width="1.3" fill="none"/></svg>
<div class="a rs" style="left:415px;top:606px;width:19px;height:15px;background:#F0F0F0;"></div>
<div class="a tx" style="left:124px;width:600px;text-align:center;top:608px;font-size:12px;line-height:12px;font-weight:normal;color:#000;letter-spacing:-0.2px;">&gt;</div>
<div class="a tx" style="left:209px;top:671px;font-size:13px;line-height:13px;font-weight:bold;color:#000;letter-spacing:0.25px;">Referral Source:</div>
<div class="a sk" style="left:208px;top:685px;width:140px;height:20px;background:#fff;"></div>
<div class="a tx" style="left:211px;top:691px;font-size:11px;line-height:11px;font-weight:bold;color:#000;letter-spacing:0.3px;">Walk in</div>
<div class="a rs" style="left:331px;top:687px;width:16px;height:16px;background:#F0F0F0;"></div>
<svg class="a" style="left:335px;top:694px" width="8" height="4"><path d="M0 0h7l-3.5 4z" fill="#000"/></svg>
<div class="a rs" style="left:349px;top:684px;width:19px;height:19px;background:#F0F0F0;"></div>
<div class="a tx" style="left:58px;width:600px;text-align:center;top:688px;font-size:12px;line-height:12px;font-weight:normal;color:#000;letter-spacing:-0.2px;">&gt;</div>
<div class="a sk" style="left:534px;top:593px;width:113px;height:115px;box-shadow:inset 1px 1px 0 #696969,inset -1px -1px 0 #e3e3e3,inset 2px 2px 0 #fff"></div>
<div class="a tx" style="right:467px;top:599px;font-size:13px;line-height:13px;font-weight:bold;color:#000;letter-spacing:0.25px;">Sale Amount</div>
<div class="a sk" style="left:540px;top:597px;width:100px;height:18px;background:#F2F6FC;"></div>
<div class="a tx" style="right:362px;top:601px;font-size:12px;line-height:12px;font-weight:normal;color:#000;">$383.09</div>
<div class="a tx" style="right:467px;top:621px;font-size:13px;line-height:13px;font-weight:bold;color:#000;letter-spacing:0.25px;">$ Discount</div>
<div class="a sk" style="left:540px;top:619px;width:100px;height:18px;background:#fff;"></div>
<div class="a tx" style="right:362px;top:623px;font-size:12px;line-height:12px;font-weight:normal;color:#000;">$0.00</div>
<div class="a tx" style="right:467px;top:645px;font-size:13px;line-height:13px;font-weight:bold;color:#000;letter-spacing:0.25px;">Sub Total</div>
<div class="a sk" style="left:540px;top:641px;width:100px;height:18px;background:#F2F6FC;"></div>
<div class="a tx" style="right:362px;top:645px;font-size:12px;line-height:12px;font-weight:normal;color:#000;">$0.00</div>
<div class="a tx" style="right:467px;top:665px;font-size:13px;line-height:13px;font-weight:bold;color:#000;letter-spacing:0.25px;">Freight</div>
<div class="a sk" style="left:540px;top:663px;width:100px;height:18px;background:#fff;"></div>
<div class="a tx" style="right:362px;top:667px;font-size:12px;line-height:12px;font-weight:normal;color:#000;">$0.00</div>
<div class="a tx" style="right:467px;top:687px;font-size:13px;line-height:13px;font-weight:bold;color:#000;letter-spacing:0.25px;">Total GST</div>
<div class="a sk" style="left:540px;top:684px;width:100px;height:17px;background:#F2F6FC;"></div>
<div class="a tx" style="right:362px;top:687px;font-size:12px;line-height:12px;font-weight:normal;color:#000;">$38.31</div>
<div class="a tx" style="left:651px;top:603px;font-size:13px;line-height:13px;font-weight:bold;color:#000;">% Discount</div>
<div class="a sk" style="left:650px;top:620px;width:46px;height:17px;background:#fff;"></div>
<div class="a tx" style="left:657px;top:623px;font-size:12px;line-height:12px;font-weight:normal;color:#000;">%0.00</div>
<div class="a sk" style="left:856px;top:593px;width:108px;height:83px;box-shadow:inset 1px 1px 0 #696969,inset -1px -1px 0 #e3e3e3,inset 2px 2px 0 #fff"></div>
<div class="a tx" style="right:145px;top:603px;font-size:13px;line-height:13px;font-weight:bold;color:#000;letter-spacing:0.4px;">Invoice Total</div>
<div class="a sk" style="left:860px;top:600px;width:101px;height:17px;background:#F2F6FC;"></div>
<div class="a tx" style="right:41px;top:604px;font-size:12px;line-height:12px;font-weight:normal;color:#000;">$421.40</div>
<div class="a tx" style="left:764px;top:625px;font-size:11px;line-height:11px;font-weight:bold;color:#000;letter-spacing:0.3px;">Deposits Taken</div>
<div class="a tx" style="left:764px;top:638px;font-size:11px;line-height:11px;font-weight:bold;color:#000;letter-spacing:0.3px;">From Job Card</div>
<div class="a sk" style="left:860px;top:627px;width:101px;height:18px;background:#fff;"></div>
<div class="a tx" style="right:41px;top:631px;font-size:12px;line-height:12px;font-weight:normal;color:#000;">$0.00</div>
<div class="a tx" style="right:145px;top:655px;font-size:13px;line-height:13px;font-weight:bold;color:#000;">Balance Due</div>
<div class="a sk" style="left:860px;top:653px;width:101px;height:18px;background:#fff;"></div>
<div class="a tx" style="right:41px;top:657px;font-size:12px;line-height:12px;font-weight:normal;color:#000;">$421.40</div>
<div class="a tx" style="left:672px;top:689px;font-size:13px;line-height:13px;font-weight:bold;color:#000;">Round amount?</div>
<div class="a sk" style="left:780px;top:688px;width:13px;height:13px;background:#fff;"></div>
<div class="a tx" style="left:810px;top:687px;font-size:13px;line-height:13px;font-weight:bold;color:#000;letter-spacing:-0.1px;">Rounding</div>
<div class="a sk" style="left:880px;top:685px;width:66px;height:18px;background:#F2F6FC;"></div>
<div class="a tx" style="right:56px;top:689px;font-size:12px;line-height:12px;font-weight:normal;color:#000;">$0.00</div>
<div class="a rs" style="left:370px;top:709px;width:62px;height:37px;background:#FFC080;"></div>
<div class="a tx" style="left:101px;width:600px;text-align:center;top:715px;font-size:11px;line-height:11px;font-weight:normal;color:#000;letter-spacing:-0.2px;">Service</div>
<div class="a tx" style="left:101px;width:600px;text-align:center;top:729px;font-size:11px;line-height:11px;font-weight:normal;color:#000;letter-spacing:-0.2px;">History</div>
<div class="a rs" style="left:439px;top:709px;width:62px;height:37px;background:#C0C0FF;"></div>
<div class="a tx" style="left:170px;width:600px;text-align:center;top:715px;font-size:11px;line-height:11px;font-weight:normal;color:#000;letter-spacing:-0.2px;">Visual</div>
<div class="a tx" style="left:170px;width:600px;text-align:center;top:729px;font-size:11px;line-height:11px;font-weight:normal;color:#000;letter-spacing:-0.2px;">Inspection</div>
<div class="a rs" style="left:558px;top:709px;width:67px;height:37px;background:#FFE0C0;"></div>
<div class="a tx" style="left:291px;width:600px;text-align:center;top:715px;font-size:11px;line-height:11px;font-weight:normal;color:#000;letter-spacing:-0.2px;">Standard</div>
<div class="a tx" style="left:291px;width:600px;text-align:center;top:729px;font-size:11px;line-height:11px;font-weight:normal;color:#000;letter-spacing:-0.2px;">Jobs / Kits</div>
<div class="a rs" style="left:672px;top:709px;width:157px;height:37px;background:#C0FFC0;"></div>
<div class="a tx" style="left:450px;width:600px;text-align:center;top:715px;font-size:11px;line-height:11px;font-weight:normal;color:#000;letter-spacing:-0.2px;">Recalculate + Make Payment +</div>
<div class="a tx" style="left:450px;width:600px;text-align:center;top:729px;font-size:11px;line-height:11px;font-weight:normal;color:#000;letter-spacing:-0.2px;">Print + Save or Email</div>
<div class="a rs" style="left:832px;top:709px;width:67px;height:37px;background:#FF8080;"></div>
<div class="a tx" style="left:565px;width:600px;text-align:center;top:715px;font-size:11px;line-height:11px;font-weight:normal;color:#000;letter-spacing:-0.2px;">Recalculate</div>
<div class="a tx" style="left:565px;width:600px;text-align:center;top:729px;font-size:11px;line-height:11px;font-weight:normal;color:#000;letter-spacing:-0.2px;">+ Save</div>
<div class="a rs" style="left:902px;top:709px;width:67px;height:37px;background:#FF0000;"></div>
<div class="a tx" style="left:635px;width:600px;text-align:center;top:723px;font-size:11px;line-height:11px;font-weight:normal;color:#200000;letter-spacing:-0.2px;">Recalculate</div>
</body></html>
